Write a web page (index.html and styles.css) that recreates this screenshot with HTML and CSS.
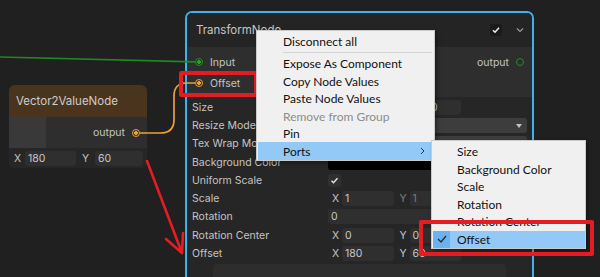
FILE: index.html
```html
<!DOCTYPE html>
<html lang="en">
<head>
  <meta charset="UTF-8" />
  <title>Mixture Graph - TransformNode</title>
  <link rel="stylesheet" href="styles.css">
</head>
<body>
  <div class="graph">

    <div class="node vec-node">
      <div class="vec-title">Vector2ValueNode</div>
      <div class="vec-body">
        <div class="vec-preview"></div>
        <div class="vec-out">output <span class="port port-orange on"></span></div>
      </div>
      <div class="vec-fields">
        <span class="axis">X</span><span class="field vf-x">180</span>
        <span class="axis axis-y">Y</span><span class="field vf-y">60</span>
      </div>
    </div>

    <div class="node tf-node">
      <div class="tf-title">
        <span>TransformNode</span>
        <div class="tf-tools">
          <span class="head-check">
            <svg width="12" height="12" viewBox="0 0 12 12"><path d="M3 6.2 L5 8.2 L9 3.8" fill="none" stroke="#f2f2f2" stroke-width="1.5"/></svg>
          </span>
          <svg class="chev" width="8" height="6" viewBox="0 0 8 6"><path d="M1 1.5 L4 4.5 L7 1.5" fill="none" stroke="#9a9a9a" stroke-width="1.2"/></svg>
        </div>
      </div>

      <div class="tf-ports">
        <div class="port-row">
          <div class="port-in"><span class="port port-green on"></span>Input</div>
          <div class="port-out">output<span class="port port-green"></span></div>
        </div>
        <div class="port-row">
          <div class="port-in"><span class="port port-orange on"></span>Offset</div>
        </div>
      </div>

      <div class="tf-props">
        <div class="prop">
          <span class="prop-label">Size</span>
          <span class="size-gap"></span><span class="field size-field">0</span>
        </div>
        <div class="prop">
          <span class="prop-label">Resize Mode</span>
          <span class="dropdown"></span>
        </div>
        <div class="prop">
          <span class="prop-label">Tex Wrap Mode</span>
          <span class="dropdown"></span>
        </div>
        <div class="prop">
          <span class="prop-label">Background Color</span>
          <span class="color-field"></span>
        </div>
        <div class="prop">
          <span class="prop-label">Uniform Scale</span>
          <span class="toggle">
            <svg width="13" height="13" viewBox="0 0 13 13"><path d="M3.5 6.8 L5.5 8.8 L9.5 4.2" fill="none" stroke="#e6e6e6" stroke-width="1.4"/></svg>
          </span>
        </div>
        <div class="prop">
          <span class="prop-label">Scale</span>
          <div class="vec2">
            <div class="half"><span class="axis">X</span><span class="field">1</span></div>
            <div class="half dim"><span class="axis">Y</span><span class="field">1</span></div>
          </div>
        </div>
        <div class="prop">
          <span class="prop-label">Rotation</span>
          <span class="field wide">0</span>
        </div>
        <div class="prop">
          <span class="prop-label">Rotation Center</span>
          <div class="vec2">
            <div class="half"><span class="axis">X</span><span class="field">0</span></div>
            <div class="half"><span class="axis">Y</span><span class="field">0</span></div>
          </div>
        </div>
        <div class="prop">
          <span class="prop-label">Offset</span>
          <div class="vec2">
            <div class="half"><span class="axis">X</span><span class="field">180</span></div>
            <div class="half"><span class="axis">Y</span><span class="field">60</span></div>
          </div>
        </div>
        <div class="preview-box"></div>
      </div>
    </div>

    <svg class="wires" width="600" height="277" viewBox="0 0 600 277">
      <path d="M0 57 L195 61.8" stroke="#1d8a1d" stroke-width="1.7" fill="none"/>
      <path d="M140 133 L160 133 Q174 133 174 120 L174 96 Q174 83 187 83 L195 83" stroke="#eca03c" stroke-width="1.7" fill="none"/>
      <path d="M147 161 L182 253 M166 239 L182 253 L183 233" stroke="#e41c24" stroke-width="2.6" fill="none" stroke-linecap="round" stroke-linejoin="round"/>
    </svg>

    <div class="mark mark-port"></div>

    <div class="menu ctx-menu">
      <div class="menu-item">Disconnect all</div>
      <div class="menu-sep"></div>
      <div class="menu-item">Expose As Component</div>
      <div class="menu-item">Copy Node Values</div>
      <div class="menu-item">Paste Node Values</div>
      <div class="menu-item disabled">Remove from Group</div>
      <div class="menu-item">Pin</div>
      <div class="menu-item active">Ports
        <svg class="sub-arrow" width="5" height="8" viewBox="0 0 5 8"><path d="M1 1 L4 4 L1 7" fill="none" stroke="#333" stroke-width="1"/></svg>
      </div>
    </div>

    <div class="menu sub-menu">
      <div class="menu-item">Size</div>
      <div class="menu-item">Background Color</div>
      <div class="menu-item">Scale</div>
      <div class="menu-item">Rotation</div>
      <div class="menu-item">Rotation Center</div>
      <div class="menu-item active checked">
        <span class="check-col">
          <svg width="12" height="10" viewBox="0 0 12 10"><path d="M2 5 L5 8 L10 2" fill="none" stroke="#2b2b2b" stroke-width="1.3"/></svg>
        </span>Offset
      </div>
    </div>

    <div class="mark mark-item"></div>
  </div>
</body>
</html>
```

FILE: styles.css
```css
* {
  margin: 0; padding: 0; box-sizing: border-box;
}
body {
  background: #202020; color: #c4c4c4;
  font-family: Inter, "Noto Sans", sans-serif;
  overflow: hidden;
}
.graph {
  position: relative; width: 600px; height: 277px;
  overflow: hidden;
}
.node {
  position: absolute;
}

/* ports */
.port {
  display: inline-block; width: 8px; height: 8px;
  border-radius: 50%; border: 1.5px solid;
  flex: 0 0 8px;
}
.port-orange { border-color: #eca03c; }
.port-green { border-color: #1f8f1f; }
.port-orange.on { background: radial-gradient(circle, #eca03c 0 1.6px, #3b2c1c 2px); }
.port-green.on { background: radial-gradient(circle, #27a327 0 1.6px, #173c17 2px); }

/* Vector2 node */
.vec-node {
  left: 9px; top: 85px; width: 138px;
  border-radius: 6px; overflow: hidden;
  background: #2e2e2e;
}
.vec-title {
  height: 32px; background: #4a341d;
  display: flex; align-items: center;
  padding-left: 7px; font-size: 11.5px; color: #cdcdcd;
}
.vec-body {
  height: 31px; display: flex;
}
.vec-preview {
  width: 37px; background: #393939;
}
.vec-out {
  flex: 1; display: flex; align-items: center;
  justify-content: flex-end; gap: 7px;
  padding-right: 7px; font-size: 10.5px;
}
.vec-fields {
  height: 20px; background: #262626;
  display: flex; align-items: center;
  padding-left: 5px; font-size: 10.5px;
}
.vec-fields .axis { width: 11px; }
.vec-fields .axis-y { width: 13px; margin-left: 6px; }
.field {
  display: flex; align-items: center;
  height: 15px; background: #2f2f2f; border-radius: 3px;
  padding-left: 3px; font-size: 10.5px; color: #c8c8c8;
}
.vf-x { width: 51px; }
.vf-y { width: 48px; }

/* Transform node */
.tf-node {
  left: 185px; top: 11px; width: 349px; height: 285px;
  border: 2px solid #3db3ee; border-radius: 7px;
  background: #262626; overflow: hidden;
}
.tf-title {
  height: 34px; background: #242424;
  display: flex; align-items: center; justify-content: space-between;
  padding: 0 8px 0 9px; font-size: 11.5px; color: #c6c6c6;
}
.tf-tools {
  display: flex; align-items: center; gap: 14px;
}
.head-check {
  display: flex; width: 12px; height: 12px;
  background: #1a1a1a; border-radius: 2px;
}
.tf-ports {
  background: #2e2e2e; padding: 5px 0 4px;
  display: flex; flex-direction: column; gap: 1px;
}
.port-row {
  height: 20px; display: flex; align-items: center;
  justify-content: space-between; padding: 0 8px;
  font-size: 10.5px;
}
.port-in, .port-out {
  display: flex; align-items: center; gap: 7px;
}
.tf-props {
  padding: 1px 5px 0;
}
.prop {
  height: 18.3px; display: flex; align-items: center;
  font-size: 10.5px;
}
.prop-label {
  flex: 0 0 136px; white-space: nowrap; overflow: hidden;
}
.size-gap { width: 100px; }
.size-field { width: 33px; }
.dropdown, .color-field, .wide {
  width: 199px; height: 15px; border-radius: 3px;
}
.dropdown {
  background: #3d3d3d; position: relative;
}
.dropdown::after {
  content: ""; position: absolute; right: 5px; top: 6px;
  border-left: 3.5px solid transparent; border-right: 3.5px solid transparent;
  border-top: 4px solid #c4c4c4;
}
.color-field { background: #000; }
.toggle {
  display: flex; width: 13px; height: 13px;
  background: #303030; border-radius: 3px;
}
.vec2 {
  width: 133px; display: flex; gap: 2px;
}
.half {
  flex: 1; display: flex; align-items: center;
}
.half .axis { flex: 0 0 14px; padding-left: 4px; }
.half .field { flex: 1; }
.half.dim { color: #7c7c7c; }
.half.dim .field { color: #7c7c7c; }
.preview-box {
  margin: 1.5px 0 0 21px; width: 293px; height: 20px;
  background: #2d2d2d; border-radius: 3px;
}

/* overlays */
.wires {
  position: absolute; left: 0; top: 0; pointer-events: none;
}
.mark {
  position: absolute; border: 4px solid #e41c24; border-radius: 2px;
}
.mark-port { left: 179px; top: 71px; width: 79px; height: 26px; }
.mark-item { left: 419px; top: 220px; width: 175px; height: 36px; }

/* context menus */
.menu {
  position: absolute; background: #f0f0f0;
  border: 1px solid #cbcbcb;
  box-shadow: 2px 2px 4px rgba(0,0,0,0.35);
  font-family: Lato, "Noto Sans", sans-serif; font-size: 12px; color: #111;
}
.ctx-menu {
  left: 256px; top: 30px; width: 179px; height: 131px;
  padding: 2px 2px 1px 1px;
}
.sub-menu {
  left: 431px; top: 140px; width: 155px; height: 109px;
  padding: 2px 0 1px 1px;
}
.menu-item {
  height: 17.5px; display: flex; align-items: center;
  padding-left: 25px; position: relative; white-space: nowrap;
}
.sub-menu .menu-item { padding-left: 24px; }
.menu-item.disabled { color: #8d8d8d; }
.menu-item.active { background: #93c9f6; }
.menu-sep {
  height: 1px; background: #d4d4d4;
  margin: 1.5px 0 1.9px 25px;
}
.sub-arrow {
  position: absolute; right: 7px; top: 5px;
}
.sub-menu .checked { padding-left: 0; }
.check-col {
  width: 17px; height: 100%; margin-right: 7px;
  background: #6ab3f0; display: flex; align-items: center; justify-content: center;
}
```
